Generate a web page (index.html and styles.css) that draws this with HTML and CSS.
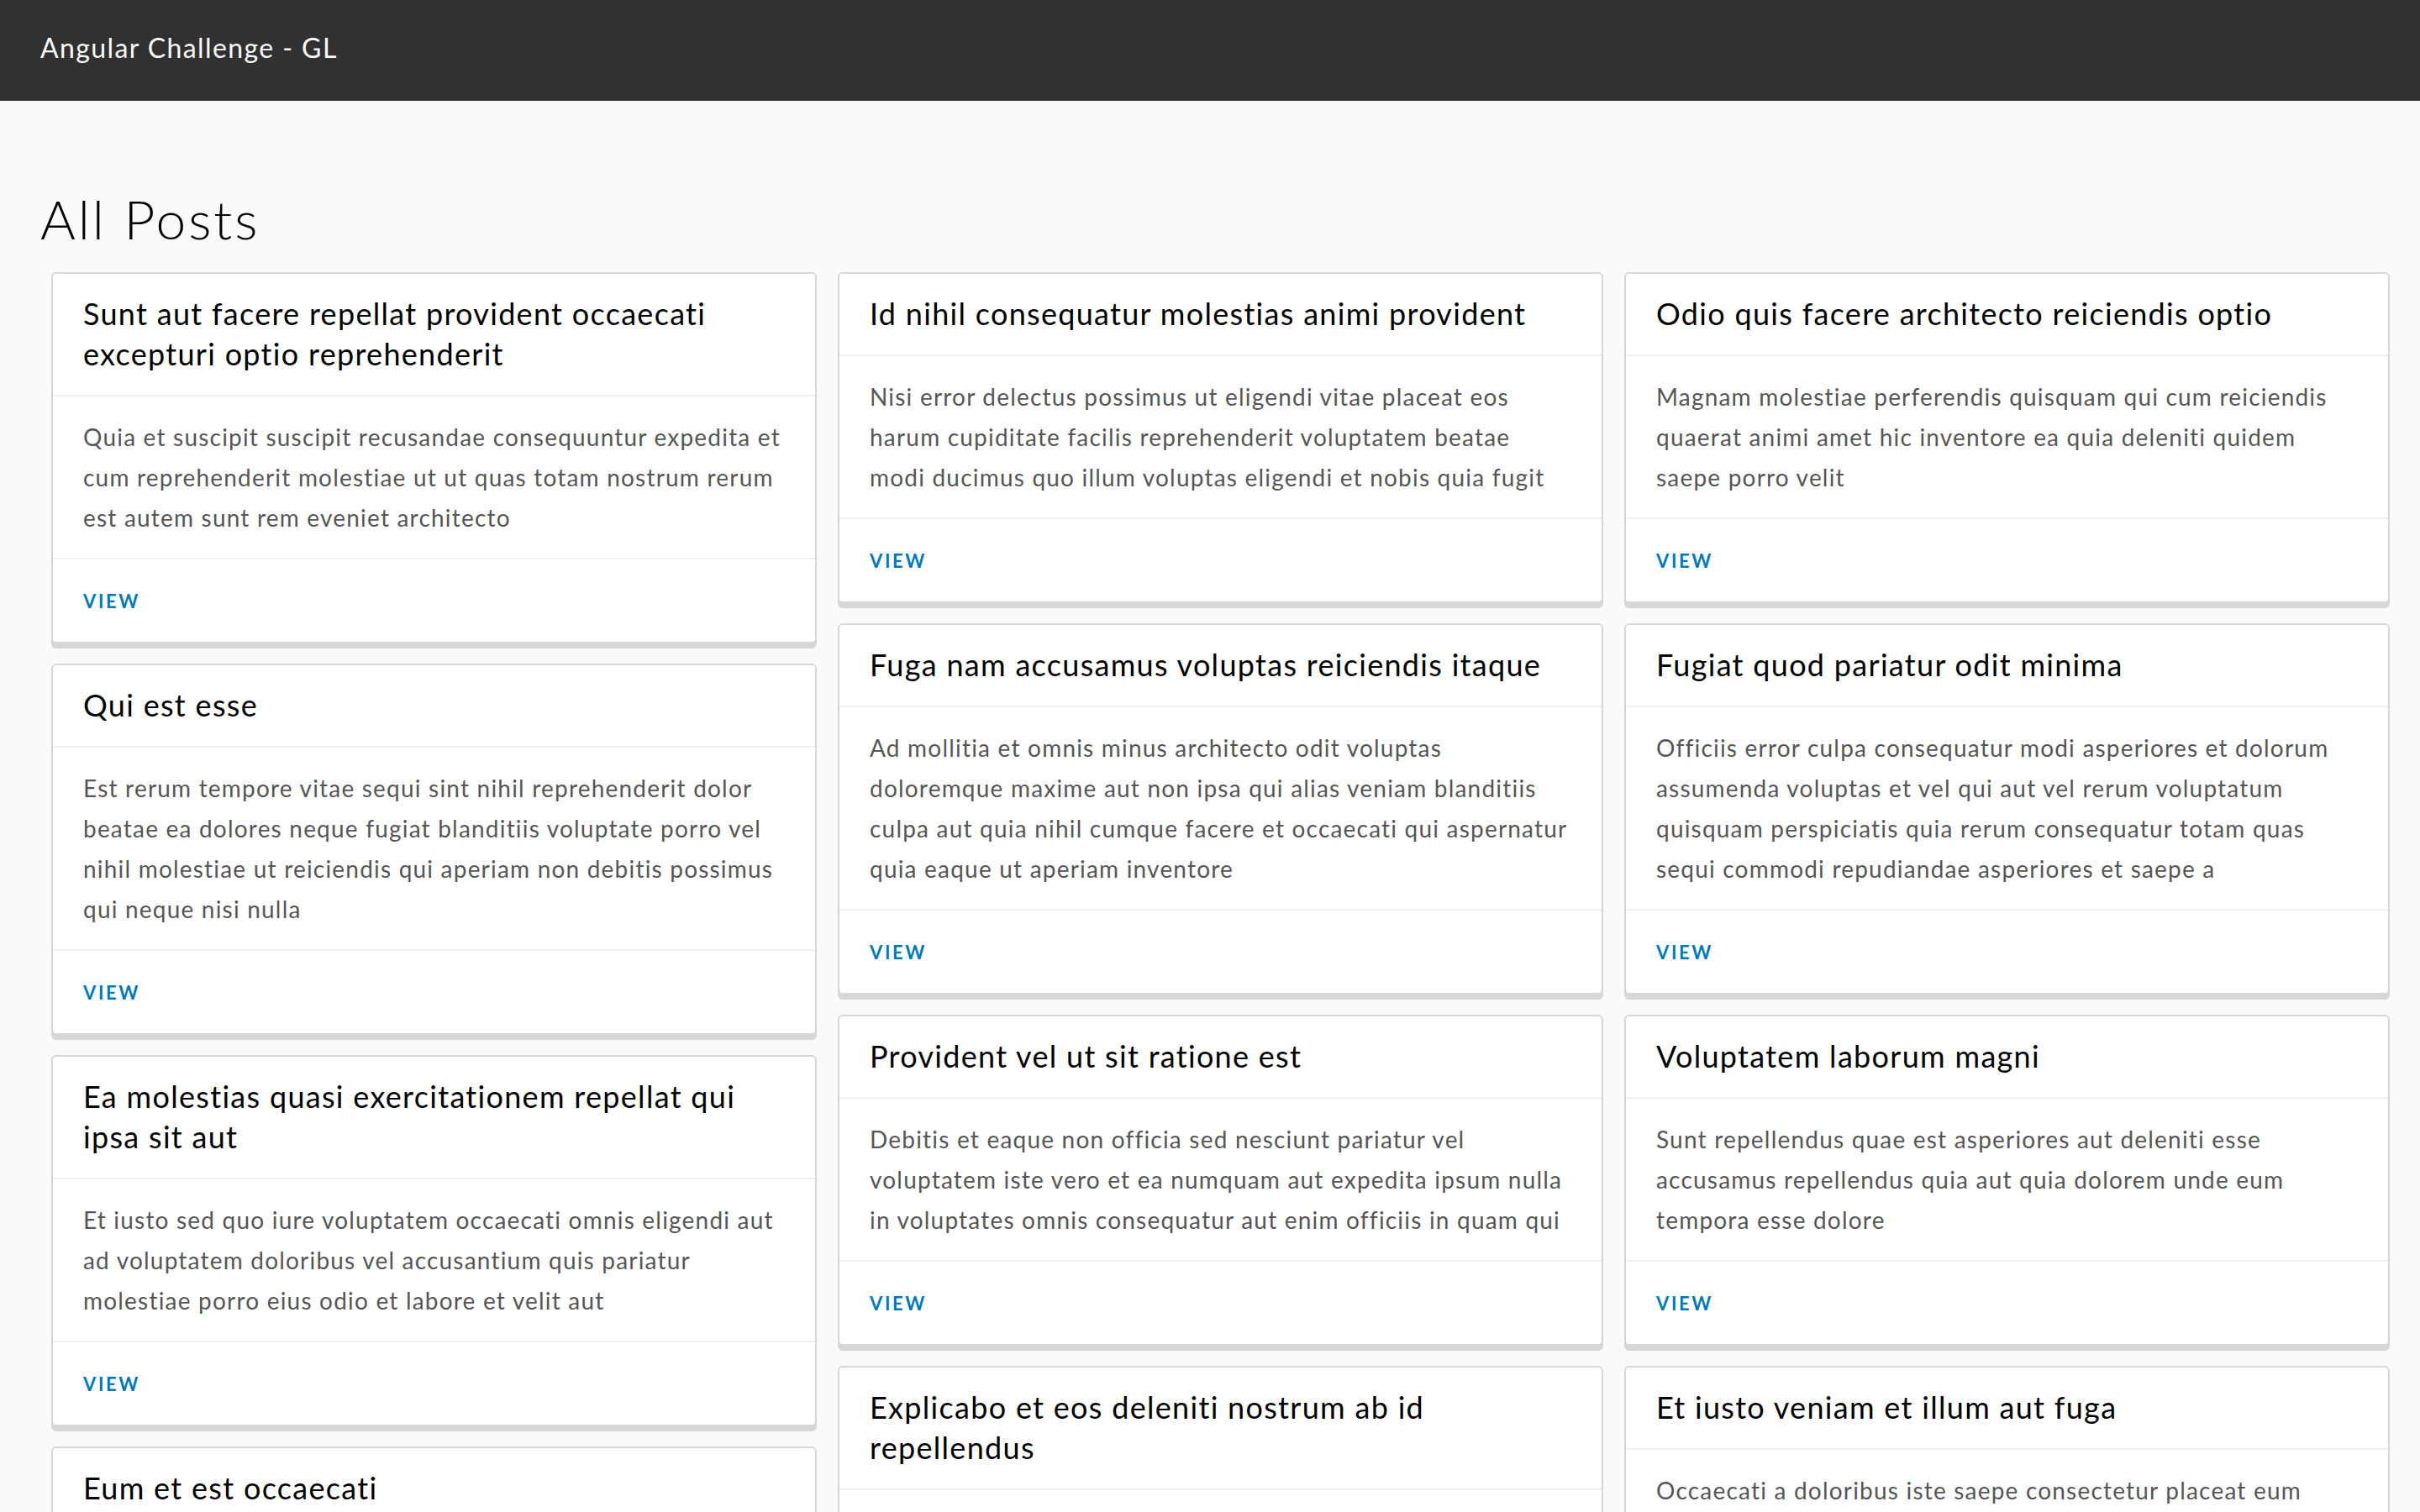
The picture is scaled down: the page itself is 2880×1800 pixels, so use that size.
FILE: index.html
```html
<!DOCTYPE html>
<html lang="en">
<head>
<meta charset="utf-8">
<title>Angular Challenge - GL</title>
<link rel="stylesheet" href="styles.css">
</head>
<body>
<header class="app-header">
  <span class="brand-title">Angular Challenge - GL</span>
</header>
<main class="content-area">
  <h1 class="page-title">All Posts</h1>
  <div class="post-grid">
    <div class="post-column">
      <article class="card">
        <div class="card-header">Sunt aut facere repellat provident occaecati<br>excepturi optio reprehenderit</div>
        <div class="card-block">Quia et suscipit suscipit recusandae consequuntur expedita et<br>cum reprehenderit molestiae ut ut quas totam nostrum rerum<br>est autem sunt rem eveniet architecto</div>
        <div class="card-footer"><a class="btn-link" href="#">View</a></div>
      </article>
      <article class="card">
        <div class="card-header">Qui est esse</div>
        <div class="card-block">Est rerum tempore vitae sequi sint nihil reprehenderit dolor<br>beatae ea dolores neque fugiat blanditiis voluptate porro vel<br>nihil molestiae ut reiciendis qui aperiam non debitis possimus<br>qui neque nisi nulla</div>
        <div class="card-footer"><a class="btn-link" href="#">View</a></div>
      </article>
      <article class="card">
        <div class="card-header">Ea molestias quasi exercitationem repellat qui<br>ipsa sit aut</div>
        <div class="card-block">Et iusto sed quo iure voluptatem occaecati omnis eligendi aut<br>ad voluptatem doloribus vel accusantium quis pariatur<br>molestiae porro eius odio et labore et velit aut</div>
        <div class="card-footer"><a class="btn-link" href="#">View</a></div>
      </article>
      <article class="card">
        <div class="card-header">Eum et est occaecati</div>
        <div class="card-block">Ullam et saepe reiciendis voluptatem adipisci sit amet autem<br>assumenda provident rerum culpa quis hic commodi nesciunt<br>rem tenetur doloremque ipsam iure quis sunt voluptatem rerum<br>illo velit</div>
        <div class="card-footer"><a class="btn-link" href="#">View</a></div>
      </article>
    </div>
    <div class="post-column">
      <article class="card">
        <div class="card-header">Id nihil consequatur molestias animi provident</div>
        <div class="card-block">Nisi error delectus possimus ut eligendi vitae placeat eos<br>harum cupiditate facilis reprehenderit voluptatem beatae<br>modi ducimus quo illum voluptas eligendi et nobis quia fugit</div>
        <div class="card-footer"><a class="btn-link" href="#">View</a></div>
      </article>
      <article class="card">
        <div class="card-header">Fuga nam accusamus voluptas reiciendis itaque</div>
        <div class="card-block">Ad mollitia et omnis minus architecto odit voluptas<br>doloremque maxime aut non ipsa qui alias veniam blanditiis<br>culpa aut quia nihil cumque facere et occaecati qui aspernatur<br>quia eaque ut aperiam inventore</div>
        <div class="card-footer"><a class="btn-link" href="#">View</a></div>
      </article>
      <article class="card">
        <div class="card-header">Provident vel ut sit ratione est</div>
        <div class="card-block">Debitis et eaque non officia sed nesciunt pariatur vel<br>voluptatem iste vero et ea numquam aut expedita ipsum nulla<br>in voluptates omnis consequatur aut enim officiis in quam qui</div>
        <div class="card-footer"><a class="btn-link" href="#">View</a></div>
      </article>
      <article class="card">
        <div class="card-header">Explicabo et eos deleniti nostrum ab id<br>repellendus</div>
        <div class="card-block">Animi esse sit aut sit nesciunt assumenda eum voluptas<br>quia voluptatibus provident quia necessitatibus ea<br>rerum repudiandae quia voluptatem delectus fugit aut id quia<br>ratione optio eos iusto veniam iure</div>
        <div class="card-footer"><a class="btn-link" href="#">View</a></div>
      </article>
    </div>
    <div class="post-column">
      <article class="card">
        <div class="card-header">Odio quis facere architecto reiciendis optio</div>
        <div class="card-block">Magnam molestiae perferendis quisquam qui cum reiciendis<br>quaerat animi amet hic inventore ea quia deleniti quidem<br>saepe porro velit</div>
        <div class="card-footer"><a class="btn-link" href="#">View</a></div>
      </article>
      <article class="card">
        <div class="card-header">Fugiat quod pariatur odit minima</div>
        <div class="card-block">Officiis error culpa consequatur modi asperiores et dolorum<br>assumenda voluptas et vel qui aut vel rerum voluptatum<br>quisquam perspiciatis quia rerum consequatur totam quas<br>sequi commodi repudiandae asperiores et saepe a</div>
        <div class="card-footer"><a class="btn-link" href="#">View</a></div>
      </article>
      <article class="card">
        <div class="card-header">Voluptatem laborum magni</div>
        <div class="card-block">Sunt repellendus quae est asperiores aut deleniti esse<br>accusamus repellendus quia aut quia dolorem unde eum<br>tempora esse dolore</div>
        <div class="card-footer"><a class="btn-link" href="#">View</a></div>
      </article>
      <article class="card">
        <div class="card-header">Et iusto veniam et illum aut fuga</div>
        <div class="card-block">Occaecati a doloribus iste saepe consectetur placeat eum<br>voluptate dolorem et qui quo quia voluptas rerum ut id enim<br>velit est perferendis</div>
        <div class="card-footer"><a class="btn-link" href="#">View</a></div>
      </article>
    </div>
  </div>
</main>
</body>
</html>
```
FILE: styles.css
```css
html, body {
  margin: 0;
  padding: 0;
}

body {
  background: #fafafa;
  font-family: Lato, "Open Sans", "Liberation Sans", sans-serif;
  color: #565656;
}

.app-header {
  height: 120px;
  background: #313131;
  display: flex;
  align-items: center;
  padding: 0 48px 6px 48px;
  box-sizing: border-box;
}

.brand-title {
  font-size: 32px;
  line-height: 48px;
  color: #fafafa;
  letter-spacing: 1.4px;
}

.content-area {
  padding: 0 36px 48px 48px;
}

.page-title {
  margin: 93px 0 15px 0;
  font-size: 64px;
  line-height: 96px;
  font-weight: 300;
  color: #000;
  letter-spacing: 3px;
}

.post-grid {
  display: grid;
  grid-template-columns: repeat(3, 911px);
  column-gap: 25px;
  margin-left: 13px;
  align-items: start;
}

.post-column {
  display: flex;
  flex-direction: column;
  gap: 24px;
}

.card {
  background: #fff;
  border: 2px solid #d7d7d7;
  border-radius: 6px;
  box-shadow: 0 6px 0 0 #d7d7d7;
}

.card-header {
  padding: 23px 36px 25px 36px;
  font-size: 36px;
  line-height: 48px;
  color: #000;
  letter-spacing: 1.3px;
  border-bottom: 2px solid #eee;
  white-space: nowrap;
}

.card-block {
  padding: 24px 36px;
  font-size: 28px;
  line-height: 48px;
  color: #565656;
  letter-spacing: 1.2px;
  border-bottom: 2px solid #eee;
  white-space: nowrap;
}

.card-footer {
  padding: 13px 36px;
}

.btn-link {
  display: inline-flex;
  align-items: center;
  height: 72px;
  font-size: 22px;
  font-weight: 700;
  letter-spacing: 0.12em;
  text-transform: uppercase;
  color: #0079b8;
  text-decoration: none;
}
```
